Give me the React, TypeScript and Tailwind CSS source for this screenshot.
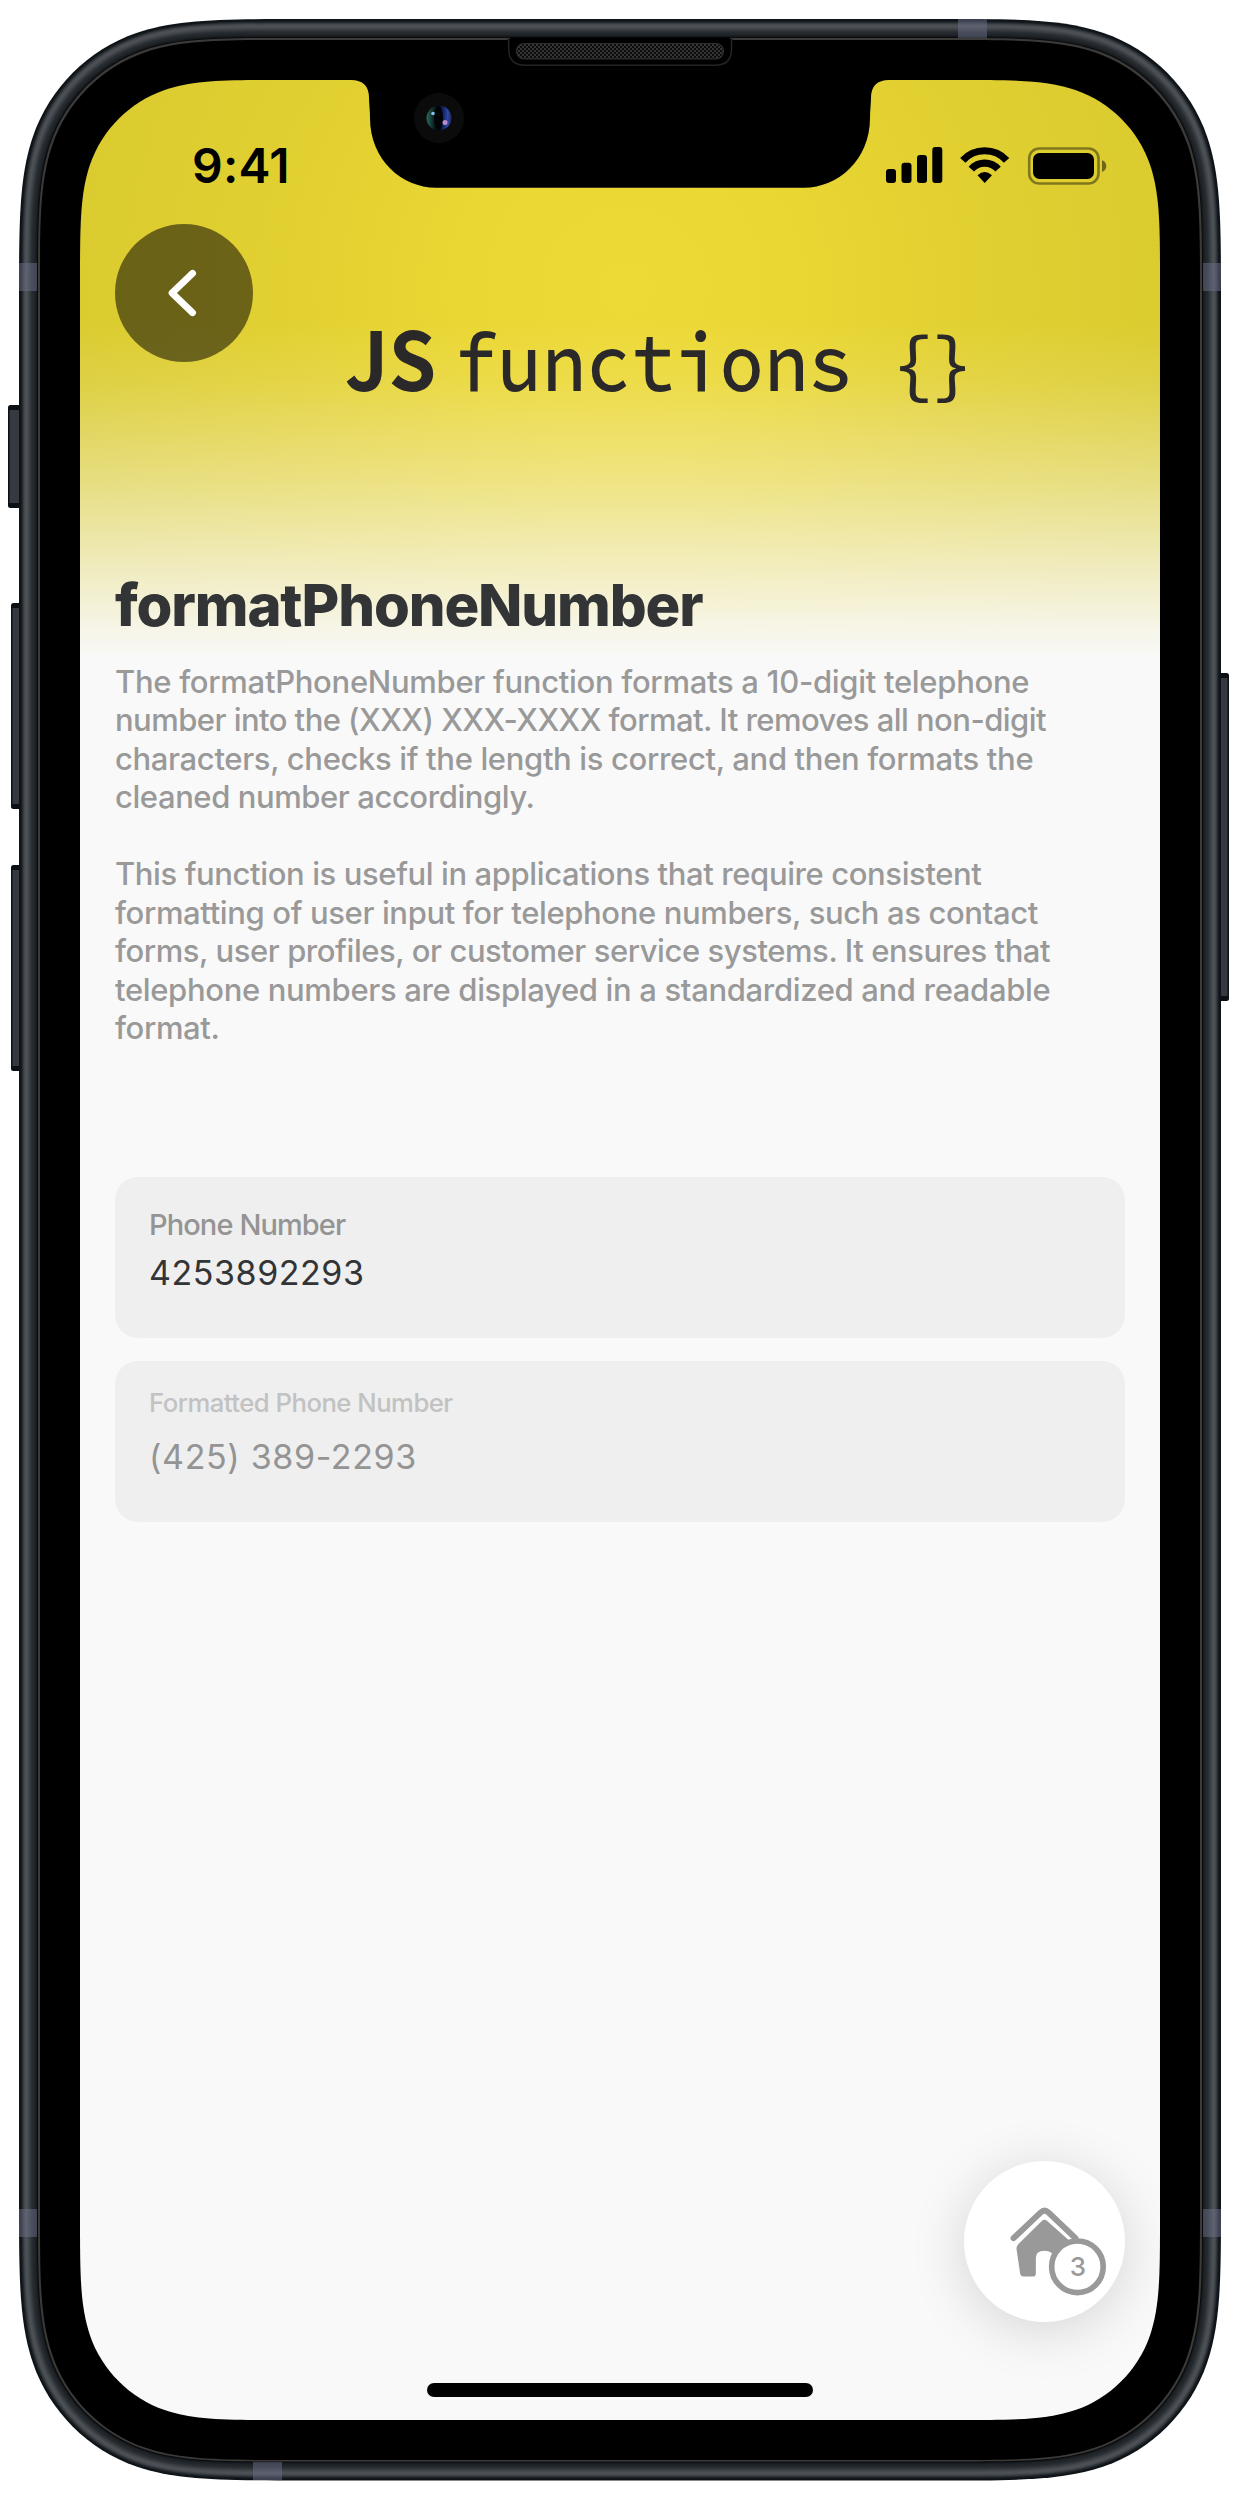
import React from "react";

const K = [
  [1.528665, 0],
  [1.08849296, 0, 0.8518, 0, 0.63149399, 0.07491176],
  [0.37282392, 0.1629, 0.1629, 0.37282392, 0.07491176, 0.63149399],
  [0, 0.8518, 0, 1.08849296, 0, 1.528665],
];

/** Rounded rectangle with continuous-curvature corners. */
function squircle(x0: number, y0: number, x1: number, y1: number, r: number) {
  const corner = (cx: number, cy: number, sx: number, sy: number, reverse: boolean) => {
    const pts: number[][] = [];
    K.forEach((row) => {
      for (let i = 0; i < row.length; i += 2) pts.push([cx + sx * row[i] * r, cy + sy * row[i + 1] * r]);
    });
    if (reverse) pts.reverse();
    const s = pts.map((p) => p[0].toFixed(2) + " " + p[1].toFixed(2));
    return s[0] + " C" + s.slice(1).join(" ");
  };
  return (
    "M" + corner(x0, y0, 1, 1, true) +
    " L" + corner(x1, y0, -1, 1, false) +
    " L" + corner(x1, y1, -1, -1, true) +
    " L" + corner(x0, y1, 1, -1, false) + " Z"
  );
}

const RIM = [
  "#0d1318", "#0f1519", "#171d22", "#272c31", "#373c41", "#43484d", "#4c5055", "#4e5257", "#4a4e53", "#43474c",
  "#3b4045", "#33383d", "#2b3035", "#262b30", "#23282d", "#20252a", "#1b2024", "#15191c", "#0a0b0c", "#3c3b3a", "#3c3b3a",
];

const BUTTONS = [
  [8, 405, 14, 103],
  [11, 603, 12, 206],
  [11, 865, 12, 206],
  [1217, 673, 12, 328],
];

const BANDS = [
  [958, 19, 29, 19],
  [253, 2462, 29, 18],
  [19, 263, 18, 28],
  [1203, 263, 18, 28],
  [19, 2209, 18, 28],
  [1203, 2209, 18, 28],
];

function Bezel() {
  return (
    <svg className="pointer-events-none absolute inset-0" width="1240" height="2500" viewBox="0 0 1240 2500">
      <defs>
        <mask id="hole">
          <rect width="1240" height="2500" fill="#fff" />
          <path d={squircle(80, 80, 1160, 2420, 134)} fill="#000" />
        </mask>
        <pattern id="mesh" width="4" height="4" patternUnits="userSpaceOnUse">
          <rect width="4" height="4" fill="#0c0c0c" />
          <rect width="2" height="2" fill="#343434" />
          <rect x="2" y="2" width="2" height="2" fill="#343434" />
        </pattern>
        <linearGradient id="lens" x1="0" x2="1">
          <stop offset="0" stopColor="#2a6a5e" />
          <stop offset=".32" stopColor="#081a1c" />
          <stop offset=".5" stopColor="#020308" />
          <stop offset=".62" stopColor="#0d1b50" />
          <stop offset=".85" stopColor="#2a49a8" />
          <stop offset="1" stopColor="#2a2350" />
        </linearGradient>
      </defs>
      <g mask="url(#hole)">
        {BUTTONS.map(([x, y, w, h]) => (
          <g key={y}>
            <rect x={x} y={y} width={w} height={h} rx="2.5" fill="#0b1014" />
            <rect x={x + 1.5} y={y + 5} width={w - 3} height={h - 10} fill="#343a3f" />
          </g>
        ))}
        {RIM.map((c, i) => (
          <path key={i} d={squircle(19 + i, 19 + i, 1221 - i, 2480.5 - i, 186 - i)} fill={c} />
        ))}
        <path d={squircle(40, 40, 1200, 2460, 166)} fill="#000" />
        {BANDS.map(([x, y, w, h], i) => (
          <rect key={i} x={x} y={y} width={w} height={h} fill="#6c6d88" opacity=".5" />
        ))}
      </g>
      <path d="M340 78 H900 V80 H889 Q871 80 871 98 C871 104 870 110 870 118 C870 160 838 187.700 804 187.700 H436 C402 187.700 370 160 370 118 C370 110 369 104 369 98 Q369 80 351 80 H340 Z" fill="#000" />
      <path d="M507 39 Q508.700 39 508.700 42 V49 Q508.700 65.300 525 65.300 H715 Q731.500 65.300 731.500 49 V42 Q731.500 39 733 39" fill="#000" stroke="#242424" strokeWidth="1.500" />
      <path d="M510 37.500 H730 V41 H510 Z" fill="#000" />
      <rect x="516.500" y="43.500" width="207" height="15.500" rx="7.700" fill="url(#mesh)" stroke="#2f2f2f" strokeWidth="1.200" />
      <circle cx="439" cy="118" r="25" fill="#0b0b0b" />
      <circle cx="439" cy="118" r="12.500" fill="url(#lens)" />
      <ellipse cx="438.500" cy="118" rx="4.500" ry="12" fill="#020306" />
      <circle cx="433" cy="113.500" r="1.800" fill="#7fc4e8" />
      <circle cx="445" cy="122.500" r="2.500" fill="#b88bd0" />
    </svg>
  );
}

function StatusIcons() {
  return (
    <svg width="222" height="40" viewBox="886 146 222 40">
      <rect x="886" y="169" width="10" height="14" rx="3" />
      <rect x="901.500" y="162.700" width="10" height="20.300" rx="3" />
      <rect x="917" y="155" width="10" height="28" rx="3" />
      <rect x="932.300" y="147" width="10" height="36" rx="3" />
      <g fill="none" stroke="#000" strokeWidth="7.200">
        <path d="M962.800 160.400 A29.700 29.700 0 0 1 1006.600 160.400" />
        <path d="M971.300 169.200 A18 18 0 0 1 998.100 169.200" />
      </g>
      <path d="M977.500 175.300 Q984.700 168.500 992 175.300 L984.700 183 Z" />
      <rect x="1029.200" y="148.500" width="69.300" height="35" rx="10" fill="none" stroke="#000" strokeOpacity=".42" strokeWidth="2.600" />
      <rect x="1033" y="153" width="61" height="26" rx="6.500" />
      <path d="M1102 160 Q1106.300 162 1106.300 166 Q1106.300 170 1102 172 Z" opacity=".5" />
    </svg>
  );
}

const PARAGRAPHS = [
  [
    ["The formatPhoneNumber function formats a 10-digit telephone", "tracking-[-0.295px]"],
    ["number into the (XXX) XXX-XXXX format. It removes all non-digit", "tracking-[-0.546px]"],
    ["characters, checks if the length is correct, and then formats the", "tracking-[-0.348px]"],
    ["cleaned number accordingly.", "tracking-[-0.421px]"],
  ],
  [
    ["This function is useful in applications that require consistent", "tracking-[-0.39px]"],
    ["formatting of user input for telephone numbers, such as contact", "tracking-[-0.367px]"],
    ["forms, user profiles, or customer service systems. It ensures that", "tracking-[-0.439px]"],
    ["telephone numbers are displayed in a standardized and readable", "tracking-[-0.339px]"],
    ["format.", "tracking-[-0.37px]"],
  ],
];

export default function App() {
  return (
    <div className="relative h-[2500px] w-[1240px] overflow-hidden bg-white p-20 font-['Inter',sans-serif]">
      <main className="relative flex h-[2340px] w-[1080px] flex-col bg-[#f9f9f9]">
        <header className="h-[585px] shrink-0 bg-[linear-gradient(to_bottom,rgba(249,249,249,0)_240px,rgba(249,249,249,.1)_300px,rgba(249,249,249,.22)_340px,rgba(249,249,249,.4)_400px,rgba(249,249,249,.68)_480px,rgba(249,249,249,.9)_545px,#f9f9f9_580px),radial-gradient(ellipse_560px_560px_at_545px_210px,#eeda36_0%,#ead733_30%,#e2d031_62%,#dacb2f_100%)]">
          <div className="flex justify-between pt-[66px] pr-[52px] pl-28">
            <span className="h-10 text-[48px] leading-[40px] font-semibold tracking-[0.3px] text-black">9:41</span>
            <StatusIcons />
          </div>
          <div className="flex pt-[38px] pl-[35px]">
            <button className="flex size-[138px] items-center justify-center rounded-full bg-black/52">
              <svg width="34" height="52" viewBox="0 0 34 52" fill="none" stroke="#fff" strokeWidth="6.8" strokeLinecap="round" strokeLinejoin="round">
                <path d="M25.600 6.300 L5 26 L25.600 45.700" />
              </svg>
            </button>
            <div className="mt-[82px] ml-[92px] flex h-[100px] w-[640px] items-baseline whitespace-nowrap text-[#2a2829]">
              <span className="w-[108px] shrink-0 origin-left scale-x-95 font-['Noto_Sans_CJK_SC',sans-serif] text-[80.5px] leading-[100px] font-bold">JS</span>
              <span className="origin-left scale-x-[.892] font-['Source_Code_Pro','DejaVu_Sans_Mono',monospace] text-[83px] leading-[100px] font-medium">
                functions <span className="-ml-1.5 text-[80.5px] tracking-[-5.3px]">{"{}"}</span>
              </span>
            </div>
          </div>
        </header>

        <h1 className="-mt-24 pl-[35px] text-[58px] leading-[72px] font-extrabold tracking-[-1.15px] text-[#333436]">formatPhoneNumber</h1>
        <div className="mt-[22px] flex flex-col gap-[38.4px] pl-[35px] text-[31px] leading-[38.45px] font-medium text-[#999]">
          {PARAGRAPHS.map((lines) => (
            <p key={lines[0][0]}>
              {lines.map(([line, tracking]) => (
                <span key={line} className={"block whitespace-nowrap " + tracking}>{line}</span>
              ))}
            </p>
          ))}
        </div>

        <div className="mx-[35px] mt-[129.5px] flex flex-col gap-[23px]">
          <div className="h-[161px] rounded-[23px] bg-[#efefef] px-[34px] pt-[30px]">
            <div className="text-[29px] leading-[36px] font-medium tracking-[-0.9px] text-[#949494]">Phone Number</div>
            <div className="mt-[9px] text-[34px] leading-[42px] tracking-[0.55px] text-[#333436]">4253892293</div>
          </div>
          <div className="h-[161px] rounded-[23px] bg-[#efefef] px-[34px] pt-[26px]">
            <div className="text-[25.7px] leading-[32px] font-medium tracking-[-0.52px] text-[#c2c2c2]">Formatted Phone Number</div>
            <div className="mt-[17px] text-[34px] leading-[42px] tracking-[0.65px] text-[#949494]">(425) 389-2293</div>
          </div>
        </div>

        <button className="absolute right-[35px] bottom-[98px] size-[161px] rounded-full bg-white shadow-[0_8px_55px_rgba(0,0,0,.15)]">
          <svg width="161" height="161" viewBox="132 120 484 484" className="block">
            <path d="M281 352 L362 275 Q374 264 386 275 L467 352" fill="none" stroke="#999" strokeWidth="18" strokeLinecap="round" />
            <path d="M366 300 Q374 293 382 300 L455 365 Q460 370 459 378 L448 460 Q447 467 440 467 H405 Q400 467 400 460 V410 Q400 390 374 390 Q348 390 348 410 V458 Q348 467 340 467 H310 Q302 467 301 460 L290 385 Q289 376 295 370 Z" fill="#999" />
            <circle cx="473" cy="438" r="77.500" fill="#fff" stroke="#999" strokeWidth="17" />
          </svg>
          <span className="absolute top-[90px] left-[98px] w-8 text-center text-[26px] leading-[32px] font-medium text-[#999]">3</span>
        </button>
        <div className="absolute bottom-[23px] left-[347px] h-[14.5px] w-[386px] rounded-full bg-black" />
      </main>
      <Bezel />
    </div>
  );
}
